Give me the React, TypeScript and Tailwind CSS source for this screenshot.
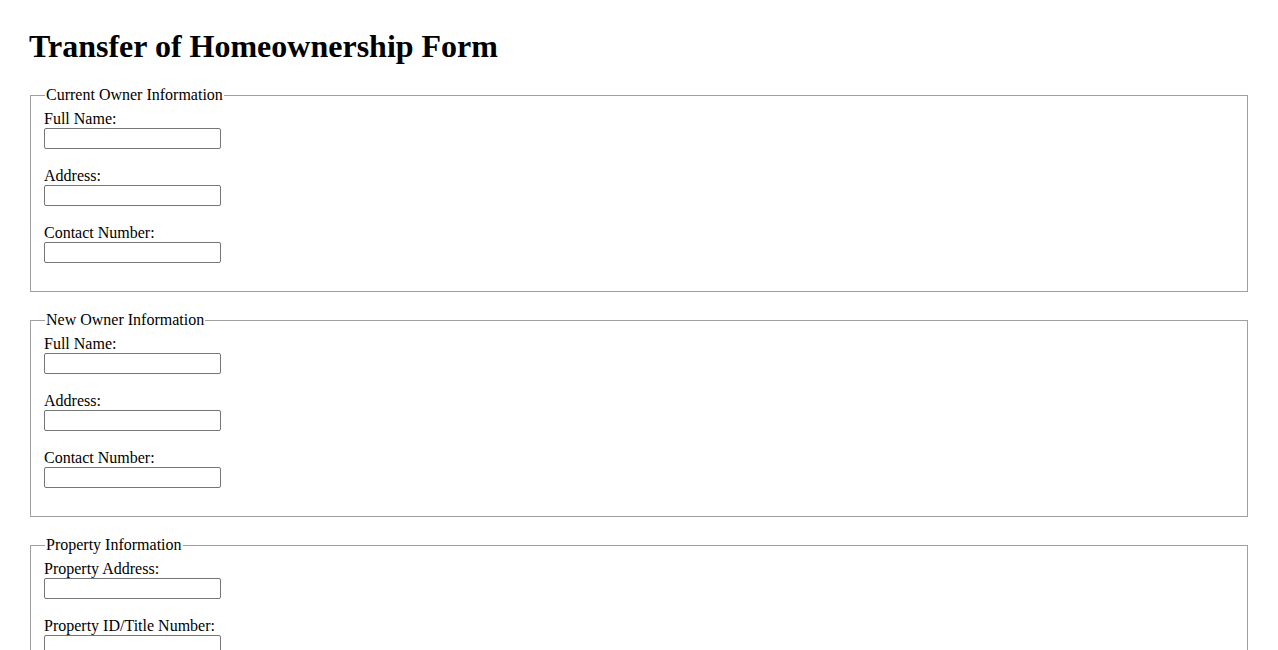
import React from "react";

function Field({ label, last }: { label: string; last?: boolean }) {
  return (
    <div className={last ? "flex flex-col items-start" : "flex flex-col items-start mb-[18.5px]"}>
      <label className="block leading-[17.5px] text-[16px]">{label}</label>
      <input
        type="text"
        className="w-[177px] h-[21px] border border-[#767676] rounded-[2px] bg-white px-[2px] py-[1px] text-[13.33px] [font-family:'Liberation_Sans',Arial,sans-serif]"
      />
    </div>
  );
}

function Section({ title, fields }: { title: string; fields: string[] }) {
  return (
    <fieldset className="mx-[2px] mb-[19px] border border-solid border-[#a0a0a0] px-[13px] pt-[5.6px] pb-[28.5px] min-w-0">
      <legend className="ml-[1px] px-[1px] leading-[18.4px] text-[16px]">{title}</legend>
      {fields.map((f, i) => (
        <Field key={f} label={f} last={i === fields.length - 1} />
      ))}
    </fieldset>
  );
}

export default function App() {
  return (
    <div className="min-h-screen bg-white text-black [font-family:'Liberation_Serif','Times_New_Roman',serif] px-[28px] pt-[28px] pb-[28px]">
      <h1 className="ml-[1px] text-[32px] font-bold leading-[36.8px] mb-[21.4px]">
        Transfer of Homeownership Form
      </h1>
      <form>
        <Section
          title="Current Owner Information"
          fields={["Full Name:", "Address:", "Contact Number:"]}
        />
        <Section
          title="New Owner Information"
          fields={["Full Name:", "Address:", "Contact Number:"]}
        />
        <Section
          title="Property Information"
          fields={["Property Address:", "Property ID/Title Number:", "Date of Transfer:"]}
        />
      </form>
    </div>
  );
}
